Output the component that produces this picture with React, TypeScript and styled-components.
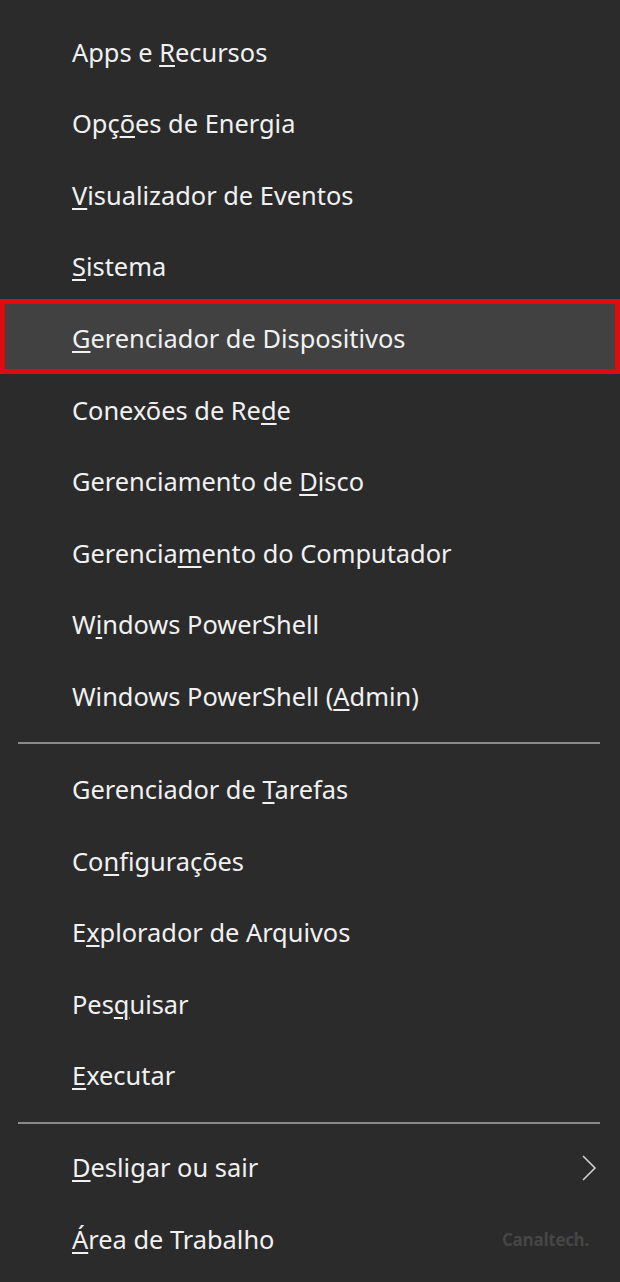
import React from "react";
import styled, { createGlobalStyle } from "styled-components";

const Global = createGlobalStyle`
  html, body { margin: 0; padding: 0; background: #2b2b2b; }
  body { font-family: "Noto Sans", "Open Sans", sans-serif; }
`;

const Menu = styled.nav`
  box-sizing: border-box;
  width: 620px;
  min-height: 1282px;
  background: #2b2b2b;
  padding-top: 17px;
  display: flex;
  flex-direction: column;
`;

const Group = styled.div`
  display: flex;
  flex-direction: column;
`;

const Row = styled.div<{ $active?: boolean }>`
  position: relative;
  box-sizing: border-box;
  height: 71.55px;
  display: flex;
  align-items: center;
  padding: 0 23px 0 72px;
  color: #f1f1f1;
  font-size: 25.4px;
  letter-spacing: 0;
  z-index: 0;
  &::before {
    content: "";
    display: ${(p) => (p.$active ? "block" : "none")};
    position: absolute;
    left: 0;
    right: 0;
    top: -4px;
    bottom: 1px;
    box-sizing: border-box;
    border: 5px solid #e10b0b;
    background: #414141;
    z-index: -1;
  }
`;

const Label = styled.span`
  white-space: pre;
  margin-top: -2px;
`;

const Key = styled.span`
  text-decoration: underline;
  text-decoration-thickness: 2px;
  text-underline-offset: 3px;
`;

const Separator = styled.hr<{ $after?: number }>`
  border: none;
  height: 2px;
  background: #8a8a8a;
  margin: 10px 20px ${(p) => p.$after ?? 10}px 18px;
`;

const Chevron = styled.svg`
  margin-left: auto;
  width: 16px;
  height: 28px;
`;

const Watermark = styled.span`
  margin-left: auto;
  margin-right: 8px;
  font-family: "Open Sans", sans-serif;
  font-weight: 700;
  font-size: 17px;
  color: #464646;
  letter-spacing: -0.3px;
`;

type Item = { pre: string; key: string; post: string; active?: boolean };

const g1: Item[] = [
  { pre: "Apps e ", key: "R", post: "ecursos" },
  { pre: "Opç", key: "õ", post: "es de Energia" },
  { pre: "", key: "V", post: "isualizador de Eventos" },
  { pre: "", key: "S", post: "istema" },
  { pre: "", key: "G", post: "erenciador de Dispositivos", active: true },
  { pre: "Conexões de Re", key: "d", post: "e" },
  { pre: "Gerenciamento de ", key: "D", post: "isco" },
  { pre: "Gerencia", key: "m", post: "ento do Computador" },
  { pre: "W", key: "i", post: "ndows PowerShell" },
  { pre: "Windows PowerShell (", key: "A", post: "dmin)" },
];

const g2: Item[] = [
  { pre: "Gerenciador de ", key: "T", post: "arefas" },
  { pre: "Co", key: "n", post: "figurações" },
  { pre: "E", key: "x", post: "plorador de Arquivos" },
  { pre: "Pes", key: "q", post: "uisar" },
  { pre: "", key: "E", post: "xecutar" },
];

const Text = ({ it }: { it: Item }) => (
  <Label>
    {it.pre}
    <Key>{it.key}</Key>
    {it.post}
  </Label>
);

export default function App() {
  return (
    <>
      <Global />
      <Menu>
        <Group>
          {g1.map((it) => (
            <Row key={it.pre + it.key} $active={it.active}>
              <Text it={it} />
            </Row>
          ))}
        </Group>
        <Separator />
        <Group>
          {g2.map((it) => (
            <Row key={it.pre + it.key}>
              <Text it={it} />
            </Row>
          ))}
        </Group>
        <Separator $after={8} />
        <Group>
          <Row>
            <Text it={{ pre: "", key: "D", post: "esligar ou sair" }} />
            <Chevron viewBox="0 0 16 28">
              <polyline
                points="2,2 14,14 2,26"
                fill="none"
                stroke="#cfcfcf"
                strokeWidth="1.6"
              />
            </Chevron>
          </Row>
          <Row>
            <Text it={{ pre: "", key: "Á", post: "rea de Trabalho" }} />
            <Watermark>Canaltech.</Watermark>
          </Row>
        </Group>
      </Menu>
    </>
  );
}
